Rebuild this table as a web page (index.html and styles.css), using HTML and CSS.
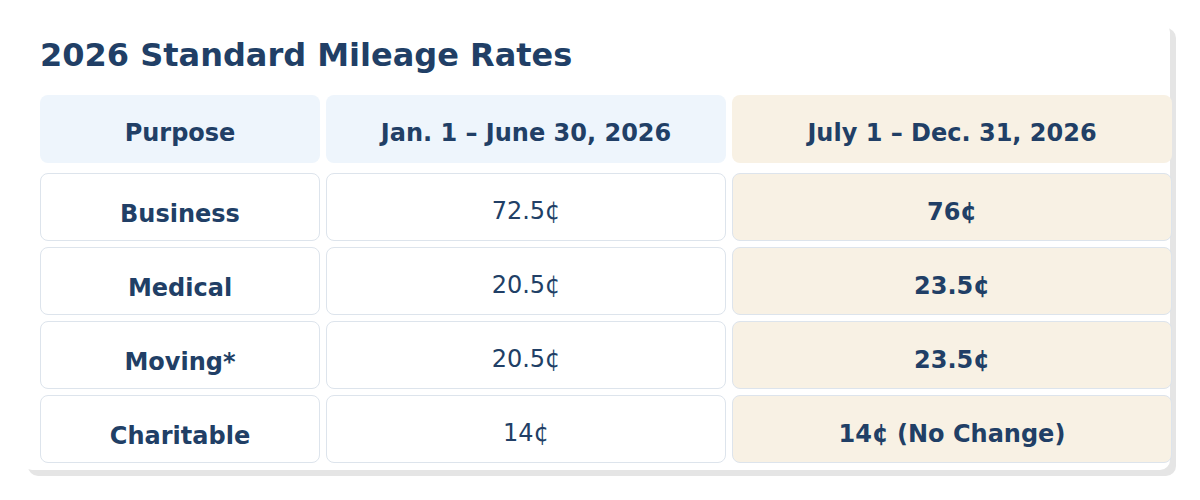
FILE: index.html
```html
<!DOCTYPE html>
<html lang="en">
<head>
<meta charset="utf-8">
<title>2026 Standard Mileage Rates</title>
<link rel="stylesheet" href="styles.css">
</head>
<body>
<div class="card">
  <h1 class="title">2026 Standard Mileage Rates</h1>
  <div class="rates">
    <div class="cell head">Purpose</div>
    <div class="cell head">Jan. 1 – June 30, 2026</div>
    <div class="cell head new">July 1 – Dec. 31, 2026</div>

    <div class="cell purpose">Business</div>
    <div class="cell old">72.5¢</div>
    <div class="cell new val">76¢</div>

    <div class="cell purpose">Medical</div>
    <div class="cell old">20.5¢</div>
    <div class="cell new val">23.5¢</div>

    <div class="cell purpose">Moving*</div>
    <div class="cell old">20.5¢</div>
    <div class="cell new val">23.5¢</div>

    <div class="cell purpose">Charitable</div>
    <div class="cell old">14¢</div>
    <div class="cell new val">14¢ (No Change)</div>
  </div>
</div>
</body>
</html>
```

FILE: styles.css
```css
html, body {
  margin: 0;
  padding: 0;
  background: #ffffff;
}

body {
  padding: 22px;
  font-family: "DejaVu Sans", Verdana, sans-serif;
  color: #213f66;
}

.card {
  width: 1148px;
  box-sizing: border-box;
  background: #ffffff;
  border-radius: 10px;
  box-shadow: 6px 6px 0 #e5e5e5;
  padding: 14px 18px 7px 18px;
}

.title {
  margin: 0 0 21px 0;
  font-size: 32px;
  font-weight: bold;
  line-height: normal;
  color: #213f66;
}

.rates {
  display: grid;
  grid-template-columns: 280px 400px 440px;
  grid-template-rows: 72px repeat(4, 68px);
  column-gap: 6px;
  row-gap: 6px;
  width: 1132px;
}

.cell {
  display: flex;
  align-items: center;
  justify-content: center;
  box-sizing: border-box;
  border-radius: 8px;
  font-size: 24px;
  line-height: normal;
  text-align: center;
}

.head {
  background: #eef5fc;
  font-weight: bold;
  padding-top: 8px;
  margin-bottom: 4px;
}

.head.new {
  background: #f8f1e4;
}

.purpose,
.old,
.val {
  border: 1px solid #dde4ec;
  background: #ffffff;
}

.purpose {
  font-weight: bold;
  padding-top: 13px;
}

.old {
  padding-top: 8px;
}

.val {
  background: #f8f1e4;
  font-weight: bold;
  padding-top: 10px;
}
```
